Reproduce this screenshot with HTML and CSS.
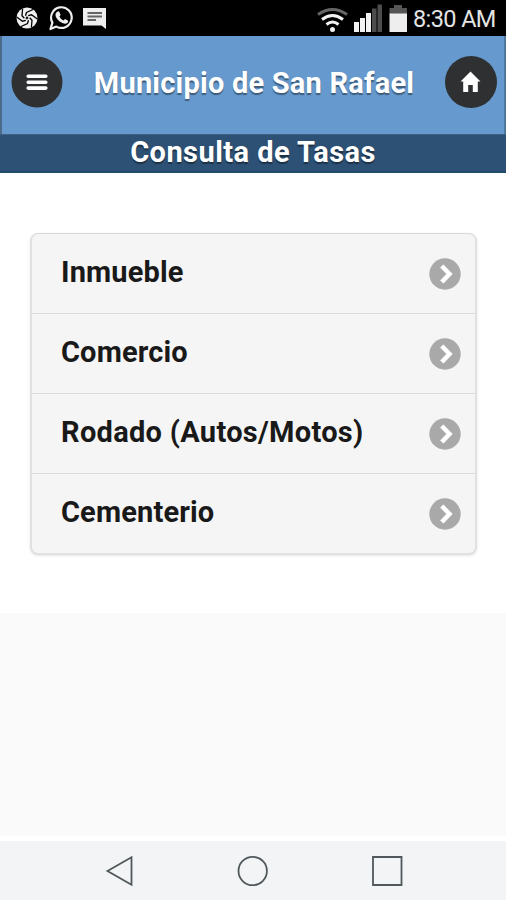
FILE: index.html
```html
<!DOCTYPE html>
<html lang="es">
<head>
<meta charset="utf-8">
<title>Municipio de San Rafael</title>
<link rel="stylesheet" href="styles.css">
</head>
<body>
<div class="status">
  <svg class="status-left" width="120" height="36" viewBox="0 0 120 36">
    <circle cx="27" cy="18" r="10.5" fill="#f0f0f0"/>
    <g stroke="#000" stroke-width="1.3" fill="none">
      <path id="blade" d="M25.500 15.800L26.500 12.500L33 9.500"/>
      <use href="#blade" transform="rotate(60 27 18)"/>
      <use href="#blade" transform="rotate(120 27 18)"/>
      <use href="#blade" transform="rotate(180 27 18)"/>
      <use href="#blade" transform="rotate(240 27 18)"/>
      <use href="#blade" transform="rotate(300 27 18)"/>
    </g>
    <circle cx="27" cy="18" r="1.4" fill="#222"/>
    <path d="M50.5 29 L52.4 22.6 A10.3 10.3 0 1 1 56.4 26.6 Z" fill="none" stroke="#eee" stroke-width="2.2" stroke-linejoin="round"/>
    <path d="M57 12c1-1 2-.9 2.5.2l.9 2.2c.2.7-.2 1.200-1 2 1 1.900 2.300 3.100 4.200 4 .8-.8 1.200-1.500 2-1.100l2.100 1.100c.8.5.4 1.900-.5 2.600-1.600 1.200-3.800.8-6.500-.9-2.800-1.800-5.300-5-5.200-7.400 0-1.200.600-2 1.500-2.700z" fill="#eee"/>
    <path d="M83 8H106V29L101.500 25.500H83Z" fill="#eee"/>
    <path d="M87.500 13H102M87.500 16.500H102M87.500 20H96" stroke="#666" stroke-width="1.800"/>
  </svg>
  <div class="status-right">
    <svg width="96" height="36" viewBox="314 0 96 36">
      <g fill="none" stroke-width="3">
        <path d="M318 14.500Q332.500 4.500 347 14.500" stroke="#666"/>
        <path d="M322 19.500Q332.500 11.500 343 19.500" stroke="#f2f2f2"/>
        <path d="M326.500 24.500Q332.500 19.500 338.500 24.500" stroke="#f2f2f2"/>
      </g>
      <circle cx="332.500" cy="29.500" r="2.500" fill="#f2f2f2"/>
      <path d="M354 22H359V32H354ZM360 18H365V32H360ZM366 13H371V32H366Z" fill="#f2f2f2"/>
      <path d="M372 8.500H376.500V32H372ZM377.500 4.500H382V32H377.500Z" fill="#4d4d4d"/>
      <path d="M394 5H402V8H407V14H389.500V8H394Z" fill="#555"/>
      <path d="M389.500 13.500H407V32H389.500Z" fill="#eee"/>
    </svg>
    <span class="clock">8:30 AM</span>
  </div>
</div>
<header class="header">
  <svg class="round" width="52" height="52" viewBox="0 0 52 52">
    <circle cx="26" cy="26" r="25.500" fill="#2e3032"/>
    <path d="M17.200 20.300H34.800M17.200 26.200H34.800M17.200 32.100H34.800" stroke="#fff" stroke-width="3.600" stroke-linecap="round"/>
  </svg>
  <h1 class="title">Municipio de San Rafael</h1>
  <svg class="round" width="52" height="52" viewBox="0 0 52 52">
    <circle cx="26" cy="26" r="26" fill="#2e3032"/>
    <path d="M25.500 15.500L35.500 25.500H32.800V36H27.800V29H23.200V36H18.200V25.500H15.500Z" fill="#fff"/>
  </svg>
</header>
<div class="subheader"><h2 class="subtitle">Consulta de Tasas</h2></div>
<main class="content">
  <ul class="list">
    <li class="item"><span class="label">Inmueble</span><svg class="arrow" viewBox="0 0 32 32"><circle cx="16" cy="16" r="15.700"/><path d="M12.800 8L20.500 16L12.800 24"/></svg></li>
    <li class="item"><span class="label">Comercio</span><svg class="arrow" viewBox="0 0 32 32"><circle cx="16" cy="16" r="15.700"/><path d="M12.800 8L20.500 16L12.800 24"/></svg></li>
    <li class="item"><span class="label label-wide">Rodado (Autos/Motos)</span><svg class="arrow" viewBox="0 0 32 32"><circle cx="16" cy="16" r="15.700"/><path d="M12.800 8L20.500 16L12.800 24"/></svg></li>
    <li class="item"><span class="label">Cementerio</span><svg class="arrow" viewBox="0 0 32 32"><circle cx="16" cy="16" r="15.700"/><path d="M12.800 8L20.500 16L12.800 24"/></svg></li>
  </ul>
</main>
<div class="filler"></div>
<nav class="nav">
  <svg width="506" height="59" viewBox="0 841 506 59" fill="none" stroke="#50585c" stroke-width="1.800">
    <path d="M107.500 871L131.500 857.300V884.700Z"/>
    <circle cx="252.700" cy="871" r="14.200"/>
    <path d="M373 857H401.500V885H373Z"/>
  </svg>
</nav>
</body>
</html>
```
FILE: styles.css
```css
* { box-sizing: border-box; }
body {
  margin: 0;
  width: 506px;
  height: 900px;
  display: flex;
  flex-direction: column;
  background: #fff;
  font-family: Roboto, "Liberation Sans", sans-serif;
  overflow: hidden;
}
svg { display: block; flex: none; }
.status {
  height: 36px;
  flex: none;
  display: flex;
  justify-content: space-between;
  background: #000;
}
.status-right { display: flex; align-items: center; }
.clock {
  width: 96px;
  padding-left: 3px;
  padding-top: 2px;
  font-size: 23.5px;
  letter-spacing: -0.6px;
  line-height: 34px;
  white-space: nowrap;
  color: #e4e4e4;
}
.header {
  height: 98px;
  flex: none;
  display: flex;
  justify-content: space-between;
  padding: 20px 7px 0 9px;
  border-left: 2px solid #4c6a8a;
  border-right: 2px solid #4f789f;
  background: #6699cd;
}
.title, .subtitle {
  margin: 0;
  font-weight: 700;
  color: #fff;
  white-space: nowrap;
  text-shadow: 0 2px 1px rgba(0, 0, 0, .4);
}
.title { font-size: 29px; line-height: 54px; letter-spacing: 0.22px; }
.subheader {
  height: 39px;
  flex: none;
  background: #2d5174;
  border-top: 1px solid #3f6182;
  border-bottom: 2px solid #214b6a;
  text-align: center;
}
.subtitle { font-size: 29px; line-height: 35px; letter-spacing: 0.45px; }
.content {
  height: 440px;
  flex: none;
  padding: 60px 29px 0 30px;
}
.list {
  list-style: none;
  margin: 0;
  padding: 0;
  border: 2px solid #e1e1e1;
  border-top-width: 1px;
  border-top-color: #d9d9d9;
  border-radius: 8px;
  background: #f5f5f5;
  box-shadow: 0 1px 3px rgba(0, 0, 0, .1);
}
.item {
  height: 80px;
  display: flex;
  justify-content: space-between;
  align-items: center;
  padding: 0 14px 0 29px;
}
.item:first-child { height: 79px; }
.item + .item { border-top: 1px solid #d9d9d9; }
.label {
  font-size: 29px;
  line-height: 34px;
  font-weight: 700;
  letter-spacing: 0.15px;
  color: #191919;
  white-space: nowrap;
  padding-bottom: 3px;
}
.label-wide { letter-spacing: 0.3px; }
.arrow { width: 32px; height: 32px; }
.arrow circle { fill: #a9a9a9; }
.arrow path { fill: none; stroke: #fff; stroke-width: 4.6; }
.filler { height: 223px; flex: none; background: #fafafa; }
.nav { margin-top: auto; height: 59px; background: #f3f4f5; }
```
